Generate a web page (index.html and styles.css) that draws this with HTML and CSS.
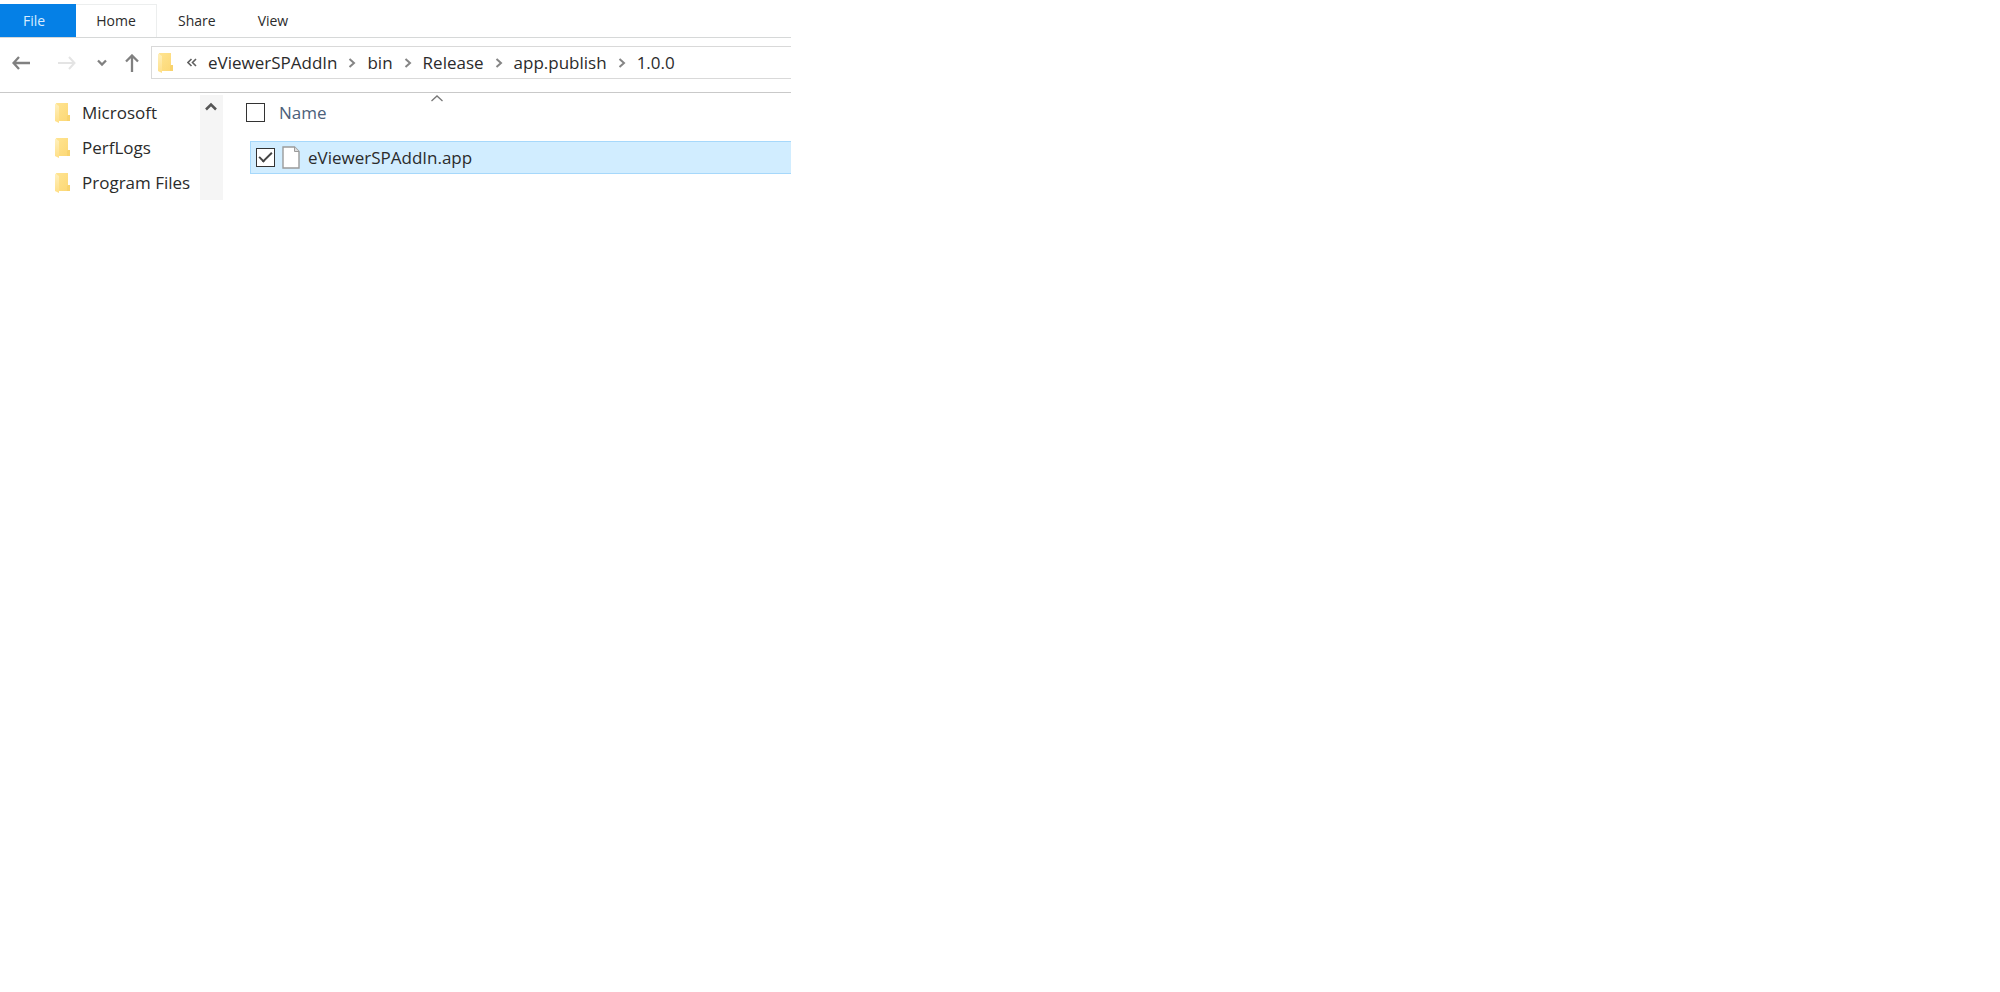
FILE: index.html
```html
<!DOCTYPE html>
<html lang="en">
<head>
<meta charset="utf-8">
<title>1.0.0</title>
<link rel="stylesheet" href="styles.css">
</head>
<body>
<svg width="0" height="0" class="defs" aria-hidden="true">
  <defs>
    <linearGradient id="back" x1="0" y1="0" x2="1" y2="1"><stop offset="0" stop-color="#ffe491"/><stop offset="1" stop-color="#fcd774"/></linearGradient>
    <linearGradient id="flap" x1="0" y1="0" x2="0" y2="1"><stop offset="0" stop-color="#fff0bd"/><stop offset="1" stop-color="#ffdf86"/></linearGradient>
  </defs>
  <symbol id="folder" viewBox="0 0 15 20">
    <path d="M1 0h12v12h2v6H4z" fill="url(#back)"/>
    <path d="M13 12h2v6h-3v-5z" fill="#f8d36e"/>
    <path d="M0 0.500L4 3v17L0 18z" fill="url(#flap)"/>
  </symbol>
  <symbol id="chevron" viewBox="0 0 8 10">
    <path d="M1.500 1L6 5 1.500 9" fill="none" stroke="#858585" stroke-width="2"/>
  </symbol>
</svg>
<div class="explorer">
  <nav class="ribbon" aria-label="Ribbon">
    <button class="tab tab-file">File</button>
    <button class="tab tab-home">Home</button>
    <button class="tab">Share</button>
    <button class="tab">View</button>
  </nav>
  <div class="toolbar">
    <div class="history">
      <button class="tool" aria-label="Back"><svg width="18" height="14" viewBox="0 0 18 14"><path d="M18 7H1.500M7 1L1.500 7 7 13" fill="none" stroke="#808080" stroke-width="2.300"/></svg></button>
      <button class="tool" aria-label="Forward" disabled><svg width="18" height="14" viewBox="0 0 18 14"><path d="M0 7h16.500M11 1l5.500 6-5.500 6" fill="none" stroke="#e4e4e4" stroke-width="2"/></svg></button>
      <button class="tool tool-recent" aria-label="Recent locations"><svg width="10" height="8" viewBox="0 0 10 8"><path d="M1 1.500l4 4 4-4" fill="none" stroke="#808080" stroke-width="2.300"/></svg></button>
      <button class="tool tool-up" aria-label="Up"><svg width="14" height="18" viewBox="0 0 14 18"><path d="M7 18V1.500M1 7.500l6-6 6 6" fill="none" stroke="#808080" stroke-width="2.300"/></svg></button>
    </div>
    <div class="address">
      <svg class="address-icon" width="15" height="20"><use href="#folder"/></svg>
      <svg class="overflow" width="10" height="9" viewBox="0 0 10 9"><path d="M4.500 1L1 4.500 4.500 8M9 1L5.500 4.500 9 8" fill="none" stroke="#606060" stroke-width="1.600"/></svg>
      <button class="crumb">eViewerSPAddIn</button>
      <svg class="sep" width="8" height="10"><use href="#chevron"/></svg>
      <button class="crumb">bin</button>
      <svg class="sep" width="8" height="10"><use href="#chevron"/></svg>
      <button class="crumb">Release</button>
      <svg class="sep" width="8" height="10"><use href="#chevron"/></svg>
      <button class="crumb">app.publish</button>
      <svg class="sep" width="8" height="10"><use href="#chevron"/></svg>
      <button class="crumb">1.0.0</button>
    </div>
  </div>
  <div class="panes">
    <aside class="tree">
      <ul class="tree-list">
        <li class="tree-item"><svg width="15" height="20"><use href="#folder"/></svg>Microsoft</li>
        <li class="tree-item"><svg width="15" height="20"><use href="#folder"/></svg>PerfLogs</li>
        <li class="tree-item"><svg width="15" height="20"><use href="#folder"/></svg>Program Files</li>
      </ul>
      <div class="scrollbar">
        <button class="tool" aria-label="Scroll up"><svg width="12" height="9" viewBox="0 0 12 9"><path d="M1 7.500l5-5 5 5" fill="none" stroke="#555" stroke-width="2.500"/></svg></button>
      </div>
    </aside>
    <main class="files">
      <div class="head">
        <input class="check" type="checkbox" id="all" aria-label="Select all">
        <button class="column">Name</button>
        <svg class="sort" width="12" height="7" viewBox="0 0 12 7"><path d="M0.500 6L6 1l5.500 5" fill="none" stroke="#777" stroke-width="1.300"/></svg>
      </div>
      <div class="row">
        <input class="check" type="checkbox" id="app" checked>
        <label class="file" for="app">
          <svg width="18" height="23" viewBox="0 0 18 23"><path d="M1 1h11.500L17 5.500V22H1z" fill="#fff" stroke="#9b9b9b" stroke-width="1.400"/><path d="M12.500 1v4.500H17" fill="#ddd" stroke="#9b9b9b"/></svg>
          eViewerSPAddIn.app
        </label>
      </div>
    </main>
  </div>
</div>
</body>
</html>
```
FILE: styles.css
```css
* { box-sizing: border-box; }

body {
  margin: 0;
  background: #fff;
  color: #2b2b2b;
  font: 17px/24px "Open Sans", "Noto Sans", sans-serif;
}

button {
  padding: 0;
  border: 0;
  background: none;
  color: inherit;
  font: inherit;
}

svg { display: block; flex: none; }
.defs { position: absolute; }

.explorer { max-width: 791px; }

.ribbon {
  display: flex;
  padding-top: 4px;
  border-bottom: 1px solid #d6d8d8;
  font-size: 14px;
}
.tab { height: 33px; padding: 0 21px; }
.tab-file { width: 76px; padding: 0 8px 0 0; background: #0580e6; color: #d8ecff; }
.tab-home { width: 81px; padding: 0; border: 1px solid #eceeee; border-width: 1px 1px 0 0; }

.toolbar {
  display: flex;
  align-items: center;
  padding: 8px 0 13px 12px;
  border-bottom: 1px solid #c9c9c9;
}
.history { display: flex; align-items: center; width: 139px; }
.tool { display: block; margin-right: 28px; }
.tool-recent { margin: 0 18px 0 -7px; }
.tool-up { margin: 0; }

.address {
  display: flex;
  flex: 1;
  align-items: center;
  height: 33px;
  border: 1px solid #d9d9d9;
  border-right: 0;
}
.address-icon { margin: 0 14px 0 6px; }
.overflow { margin-right: 11px; }
.sep { margin: 0 11px; }

.panes { display: flex; align-items: flex-start; }
.tree { display: flex; width: 223px; padding-top: 2px; }
.tree-list { flex: 1; margin: 0; padding: 0 0 0 55px; list-style: none; }
.tree-item { display: flex; align-items: center; gap: 12px; height: 35px; white-space: nowrap; }
.scrollbar { width: 23px; background: #f5f5f5; }
.scrollbar .tool { margin: 7px 0 0 5px; }

.files { flex: 1; padding-left: 23px; }
.head { position: relative; display: flex; align-items: center; gap: 14px; height: 39px; }
.column { color: #4c607a; }
.sort { position: absolute; left: 185px; top: 2px; }

.row {
  display: flex;
  align-items: center;
  gap: 7px;
  height: 33px;
  margin: 9px 0 0 4px;
  padding-left: 5px;
  border: 1px solid #a6d8fb;
  border-right: 0;
  background: #d1edff;
}
.file { display: flex; align-items: center; gap: 8px; }

.check {
  appearance: none;
  display: grid;
  place-items: center;
  width: 19px;
  height: 19px;
  margin: 0;
  border: 1px solid #333;
  background: #fff;
}
.check:checked::before {
  content: "";
  width: 11px;
  height: 5px;
  margin-bottom: 4px;
  border: solid #444;
  border-width: 0 0 2px 2px;
  transform: rotate(-45deg);
}
```
